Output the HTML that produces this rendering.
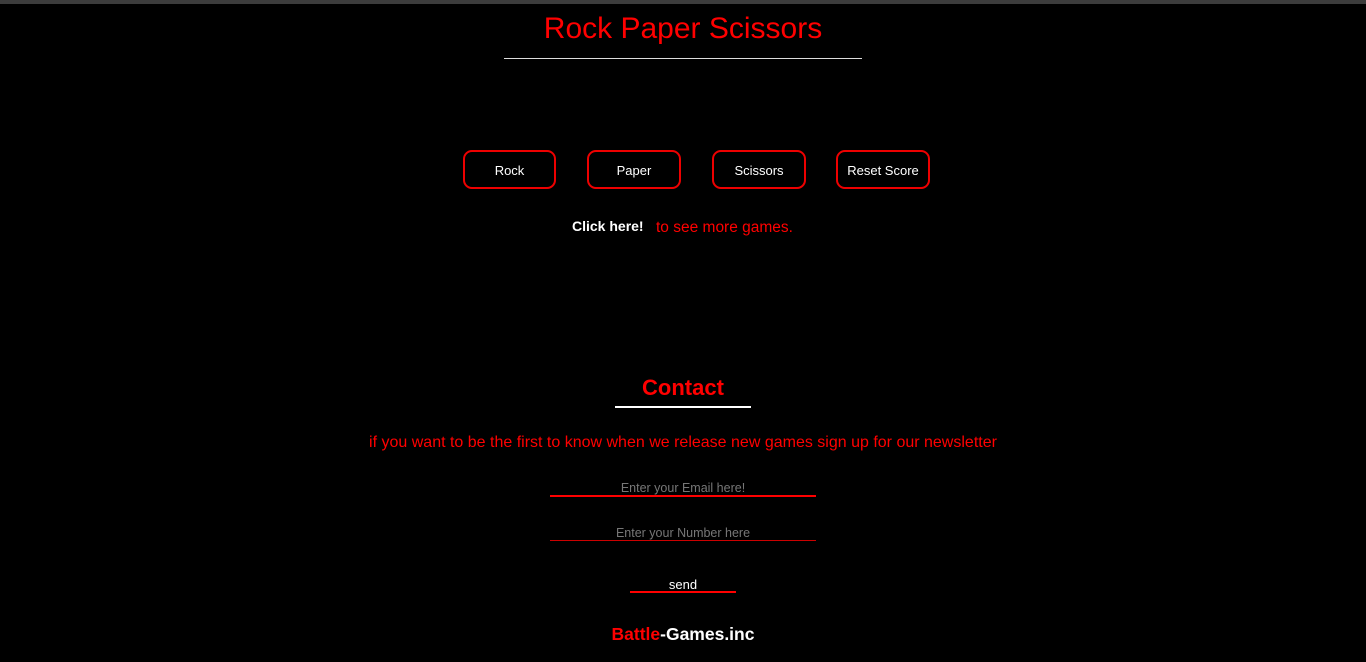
<!DOCTYPE html>
<html><head><style>
body{margin:0;width:1366px;height:662px;background:#000;overflow:hidden;position:relative;font-family:"Liberation Sans",sans-serif}
.a{position:absolute}
.topbar{left:0;top:0;width:1366px;height:4px;background:#3c3c3c}
h1{position:absolute;left:0;width:1366px;top:12px;margin:0;text-align:center;color:#f00;font-weight:normal;font-size:30px}
.btn{position:absolute;top:150px;height:35px;border:2px solid #e00;border-radius:9px;color:#fff;font-size:13px;text-align:center;line-height:38px}
.in{position:absolute;left:550px;width:266px;text-align:center;color:#777;font-size:12.5px}
</style></head><body>
<div class="a topbar"></div>
<h1>Rock Paper Scissors</h1>
<div class="a" style="left:504px;top:58px;width:358px;height:1px;background:#ddd"></div>
<div class="btn" style="left:463px;width:89px">Rock</div>
<div class="btn" style="left:587px;width:90px">Paper</div>
<div class="btn" style="left:712px;width:90px">Scissors</div>
<div class="btn" style="left:836px;width:90px">Reset Score</div>
<div class="a" style="left:572px;top:218px;color:#fff;font-weight:bold;font-size:14px">Click here!</div>
<div class="a" style="left:656px;top:219px;color:#f00;font-size:15.5px">to see more games.</div>
<div class="a" style="left:0;width:1366px;top:375px;text-align:center;color:#f00;font-weight:bold;font-size:22px">Contact</div>
<div class="a" style="left:615px;top:406px;width:136px;height:2px;background:#fff"></div>
<div class="a" style="left:0;width:1366px;top:434px;text-align:center;color:#f00;font-size:16px">if you want to be the first to know when we release new games sign up for our newsletter</div>
<div class="in" style="top:481px">Enter your Email here!</div>
<div class="a" style="left:550px;top:495px;width:266px;height:2px;background:#f00"></div>
<div class="in" style="top:526px">Enter your Number here</div>
<div class="a" style="left:550px;top:540px;width:266px;height:1px;background:#c00"></div>
<div class="a" style="left:630px;width:106px;top:577px;text-align:center;color:#fff;font-size:13px">send</div>
<div class="a" style="left:630px;top:591px;width:106px;height:2px;background:#f00"></div>
<div class="a" style="left:0;width:1366px;top:624px;text-align:center;font-weight:bold;font-size:17.5px;color:#fff"><span style="color:#f00">Battle</span>-Games.inc</div>
</body></html>
